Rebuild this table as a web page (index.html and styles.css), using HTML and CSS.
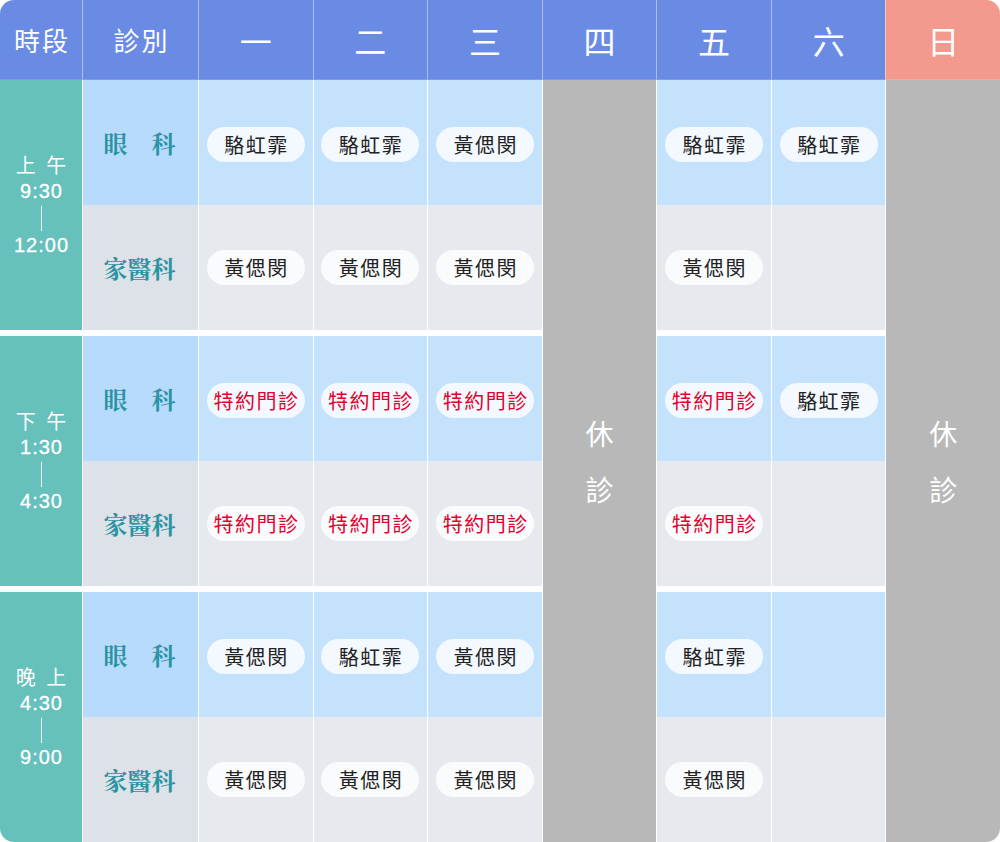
FILE: index.html
```html
<!DOCTYPE html>
<html>
<head>
    <meta charset="utf-8">
    <title>門診時間表</title>
    <link rel="stylesheet" href="styles.css">
</head>
<body>
    <div class="schedule">
        <div class="head first">時段</div>
        <div class="head">診別</div>
        <div class="head day">一</div>
        <div class="head day">二</div>
        <div class="head day">三</div>
        <div class="head day">四</div>
        <div class="head day">五</div>
        <div class="head day">六</div>
        <div class="head day sun">日</div>

        <div class="closed thu"><span>休</span><span>診</span></div>
        <div class="closed sun"><span>休</span><span>診</span></div>

        <!-- 上午 -->
        <div class="time">
            <span class="period">上 午</span>
            <span class="clock">9:30</span>
            <span class="dash"></span>
            <span class="clock">12:00</span>
        </div>
        <div class="dept eye">眼　科</div>
        <div class="cell eye"><span class="pill">駱虹霏</span></div>
        <div class="cell eye"><span class="pill">駱虹霏</span></div>
        <div class="cell eye"><span class="pill">黃偲閔</span></div>
        <div class="cell eye"><span class="pill">駱虹霏</span></div>
        <div class="cell eye"><span class="pill">駱虹霏</span></div>

        <div class="dept fam">家醫科</div>
        <div class="cell fam"><span class="pill">黃偲閔</span></div>
        <div class="cell fam"><span class="pill">黃偲閔</span></div>
        <div class="cell fam"><span class="pill">黃偲閔</span></div>
        <div class="cell fam"><span class="pill">黃偲閔</span></div>
        <div class="cell fam"></div>

        <!-- 下午 -->
        <div class="time gap">
            <span class="period">下 午</span>
            <span class="clock">1:30</span>
            <span class="dash"></span>
            <span class="clock">4:30</span>
        </div>
        <div class="dept eye gap">眼　科</div>
        <div class="cell eye gap"><span class="pill red">特約門診</span></div>
        <div class="cell eye gap"><span class="pill red">特約門診</span></div>
        <div class="cell eye gap"><span class="pill red">特約門診</span></div>
        <div class="cell eye gap"><span class="pill red">特約門診</span></div>
        <div class="cell eye gap"><span class="pill">駱虹霏</span></div>

        <div class="dept fam">家醫科</div>
        <div class="cell fam"><span class="pill red">特約門診</span></div>
        <div class="cell fam"><span class="pill red">特約門診</span></div>
        <div class="cell fam"><span class="pill red">特約門診</span></div>
        <div class="cell fam"><span class="pill red">特約門診</span></div>
        <div class="cell fam"></div>

        <!-- 晚上 -->
        <div class="time gap">
            <span class="period">晚 上</span>
            <span class="clock">4:30</span>
            <span class="dash"></span>
            <span class="clock">9:00</span>
        </div>
        <div class="dept eye gap">眼　科</div>
        <div class="cell eye gap"><span class="pill">黃偲閔</span></div>
        <div class="cell eye gap"><span class="pill">駱虹霏</span></div>
        <div class="cell eye gap"><span class="pill">黃偲閔</span></div>
        <div class="cell eye gap"><span class="pill">駱虹霏</span></div>
        <div class="cell eye gap"></div>

        <div class="dept fam">家醫科</div>
        <div class="cell fam"><span class="pill">黃偲閔</span></div>
        <div class="cell fam"><span class="pill">黃偲閔</span></div>
        <div class="cell fam"><span class="pill">黃偲閔</span></div>
        <div class="cell fam"><span class="pill">黃偲閔</span></div>
        <div class="cell fam"></div>
    </div>
</body>
</html>
```

FILE: styles.css
```css
body {
    margin: 0;
    background: #fff;
    font-family: "Noto Sans CJK TC", "Noto Sans", sans-serif;
}
.schedule {
    display: grid;
    grid-template-columns: 82px 116px repeat(7, 1fr);
    grid-template-rows: 80px 125px 125px 131px 125px 131px 125px;
    width: 1000px;
    height: 842px;
    border-radius: 14px;
    overflow: hidden;
    background: #fff;
}
.head {
    display: flex;
    align-items: center;
    justify-content: center;
    background: #6a8be4;
    color: #fff;
    font-size: 26px;
    letter-spacing: 2px;
    padding-left: 2px;
    border-left: 1px solid rgba(255, 255, 255, 0.45);
    border-bottom: 1px solid rgba(255, 255, 255, 0.15);
}
.head.first { border-left: none; }
.head.day {
    font-size: 32px;
    letter-spacing: 0;
    padding-left: 0;
}
.head.sun { background: #f4998d; }

.closed {
    display: flex;
    flex-direction: column;
    align-items: center;
    justify-content: center;
    gap: 16px;
    grid-row: 2 / -1;
    background: #b8b8b8;
    color: #fff;
    font-size: 28px;
    border-left: 1px solid #fff;
}
.closed.thu { grid-column: 6; }
.closed.sun { grid-column: 9; }

.time {
    grid-row: span 2;
    display: flex;
    flex-direction: column;
    align-items: center;
    justify-content: center;
    background: #66c0bb;
    color: #fff;
    font-size: 20px;
    line-height: 26px;
}
.time .period {
    letter-spacing: 3px;
    padding-left: 3px;
}
.time .clock {
    font-family: "Liberation Sans", Arial, sans-serif;
    letter-spacing: 1px;
    padding-left: 1px;
    -webkit-text-stroke: 0.3px #fff;
}
.time .dash {
    width: 1px;
    height: 25px;
    margin: 2px 0 1px;
    background: #fff;
}

.gap { margin-top: 6px; }

.dept {
    display: flex;
    align-items: center;
    justify-content: center;
    border-left: 1px solid #fff;
    font-family: "Noto Serif CJK TC", "Noto Serif TC", "Liberation Serif", "Noto Sans CJK TC", serif;
    font-size: 24px;
    font-weight: bold;
    color: #2a93a3;
    padding-right: 2px;
}
.dept.eye { background: #b7dbfd; }
.dept.fam { background: #dde1e8; }

.cell {
    display: flex;
    align-items: center;
    justify-content: center;
    border-left: 1px solid #fff;
}
.cell.eye { background: #c5e2fd; }
.cell.fam { background: #e6eaef; }

.pill {
    display: flex;
    align-items: center;
    justify-content: center;
    width: 98px;
    height: 35px;
    border-radius: 18px;
    background: rgba(255, 255, 255, 0.8);
    color: #222;
    font-size: 20px;
    letter-spacing: 1.5px;
    padding-left: 1.5px;
    box-sizing: border-box;
}
.cell.eye .pill { margin-top: 3px; }
.pill.red { color: #e2002d; }
```
